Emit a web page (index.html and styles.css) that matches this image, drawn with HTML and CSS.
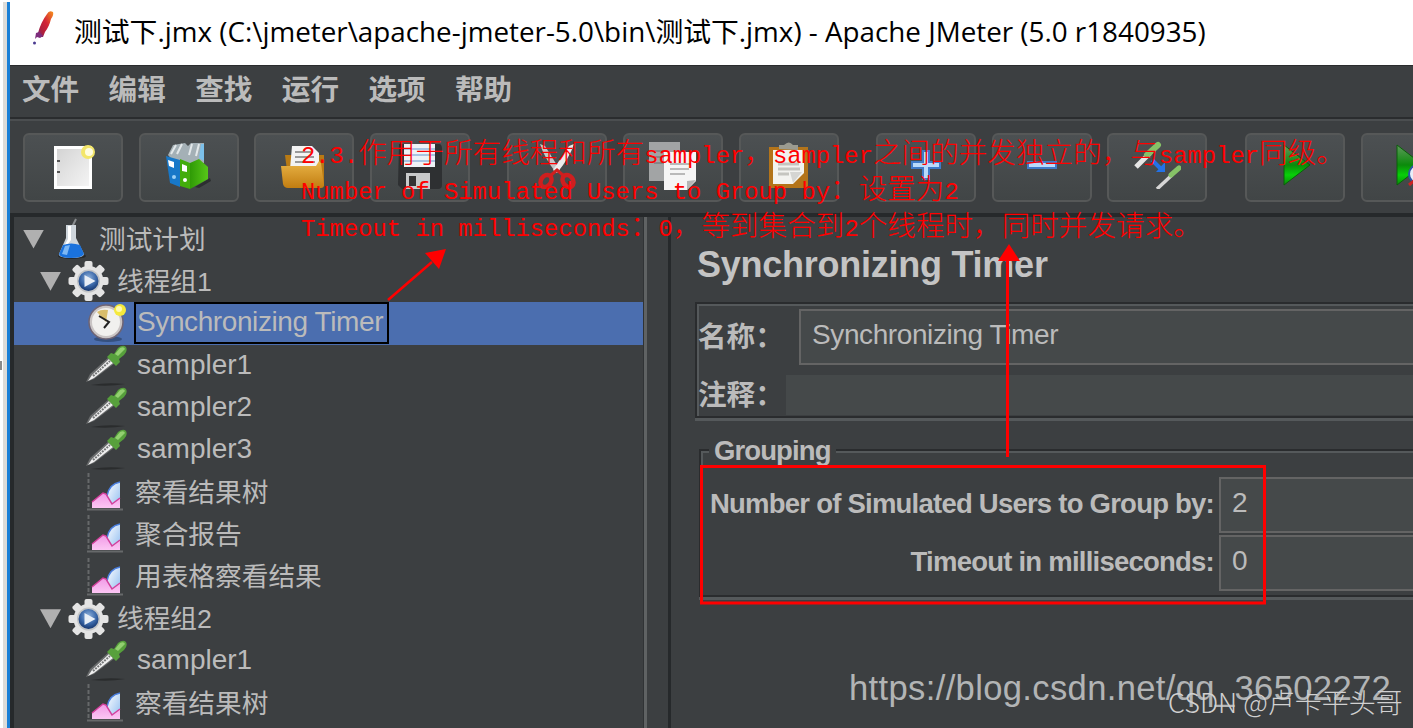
FILE: index.html
```html
<!DOCTYPE html>
<html lang="zh-CN">
<head>
  <meta charset="UTF-8" />
  <meta name="viewport" content="width=device-width, initial-scale=1.0" />
  <title>测试下.jmx - Apache JMeter</title>
  <link rel="stylesheet" href="styles.css">
</head>
<body>

  <!-- shared icons -->
  <svg class="defs" width="0" height="0">
    <defs>
      <linearGradient id="gPlay" x1="0" y1="0" x2="0" y2="1">
        <stop offset="0" stop-color="#5f9a5c" />
        <stop offset="0.5" stop-color="#0b8a0b" />
        <stop offset="0.75" stop-color="#08d008" />
        <stop offset="1" stop-color="#0a8a0a" />
      </linearGradient>
      <linearGradient id="gFolder" x1="0" y1="0" x2="0" y2="1">
        <stop offset="0" stop-color="#eab548" />
        <stop offset="1" stop-color="#c17d11" />
      </linearGradient>
      <linearGradient id="gGreen" x1="0" y1="0" x2="1" y2="0">
        <stop offset="0" stop-color="#2f9a06" />
        <stop offset="1" stop-color="#57c718" />
      </linearGradient>
      <linearGradient id="gPaper" x1="0" y1="0" x2="1" y2="1">
        <stop offset="0" stop-color="#d4d4d4" />
        <stop offset="1" stop-color="#f4f4f4" />
      </linearGradient>
      <linearGradient id="gFeather" x1="1" y1="0" x2="0" y2="1">
        <stop offset="0" stop-color="#f7941e" />
        <stop offset="0.45" stop-color="#d32335" />
        <stop offset="0.75" stop-color="#b0203c" />
        <stop offset="1" stop-color="#6a2a86" />
      </linearGradient>
      <radialGradient id="gBall" cx="0.5" cy="0.35" r="0.65">
        <stop offset="0" stop-color="#8fb2dc" />
        <stop offset="0.6" stop-color="#3a67a8" />
        <stop offset="1" stop-color="#16366e" />
      </radialGradient>
      <linearGradient id="gBlue" x1="0" y1="0" x2="1" y2="1">
        <stop offset="0" stop-color="#ffffff" />
        <stop offset="1" stop-color="#8fbcf0" />
      </linearGradient>
      <linearGradient id="gPink" x1="0" y1="0" x2="0" y2="1">
        <stop offset="0" stop-color="#f09ae6" />
        <stop offset="1" stop-color="#fcc6f4" />
      </linearGradient>
    </defs>

    <symbol id="flask" viewBox="0 0 30 42">
      <ellipse cx="16" cy="38" rx="14" ry="3" fill="#26282a" />
      <path d="M16 9L20 1" stroke="#8a8d90" stroke-width="2" />
      <path d="M10 7H20V20L28 36Q28 40 15 40Q2 40 3 36L10 20Z" fill="#cfd6dc" />
      <path d="M12 8H15V22L9 30H7L12 21Z" fill="#fff" />
      <path d="M7 27Q15 24 24 27L28 36Q26 40 15 40Q4 40 3 36Z" fill="#1a72dd" />
      <path d="M9 28L14 27L11 37L6 36Z" fill="#7db8f5" />
    </symbol>

    <symbol id="gear" viewBox="-20 -20 40 40">
      <g fill="#e4e4e4">
        <circle r="15" />
        <rect x="-4" y="-20" width="8" height="40" rx="2" />
        <rect x="-4" y="-20" width="8" height="40" rx="2" transform="rotate(45)" />
        <rect x="-4" y="-20" width="8" height="40" rx="2" transform="rotate(90)" />
        <rect x="-4" y="-20" width="8" height="40" rx="2" transform="rotate(135)" />
      </g>
      <circle r="11.500" fill="#c2c4c6" />
      <circle r="10" fill="url(#gBall)" />
      <path d="M-4 -6L7 0L-4 6Z" fill="#e8eef6" />
    </symbol>

    <symbol id="clock" viewBox="0 0 40 40">
      <ellipse cx="20" cy="36" rx="14" ry="3" fill="#35507f" />
      <circle cx="18" cy="19" r="17" fill="#c9c4c4" />
      <circle cx="18" cy="19" r="17" fill="none" stroke="#6e6474" stroke-width="1.500" />
      <circle cx="18" cy="19" r="14" fill="#f1f0ee" />
      <path d="M18 19L9 9Q13 6 20 7Z" fill="#d9bd6c" />
      <path d="M11 13L21 19L16 25" fill="none" stroke="#222" stroke-width="2" />
      <circle cx="32" cy="7" r="6" fill="#f5e93c" />
      <circle cx="31" cy="6" r="3" fill="#fffbb0" />
    </symbol>

    <symbol id="dropper" viewBox="0 0 42 42">
      <path d="M6 40Q22 37 40 39Q24 42 6 40Z" fill="#2a2c2d" />
      <path d="M1 37L5 29L24 12L30 18L9 34Z" fill="#6a6c6d" />
      <path d="M3 36L7 30L24 14L28 18L9 33Z" fill="#f0f0f0" />
      <path d="M8 31L25 16" stroke="#747677" stroke-width="2" stroke-dasharray="2 1" />
      <path d="M22 12L26 8L29 9L33 3Q38 -1 41 2Q43 6 39 10L34 14L35 17L31 21Z" fill="#57a03c" />
      <path d="M30 9L35 3Q39 1 40 4L33 11Z" fill="#93d070" />
    </symbol>

    <symbol id="chart" viewBox="0 0 38 40">
      <path d="M1.500 1V36" stroke="#66696a" stroke-width="2" stroke-dasharray="4 2" />
      <path d="M0 37.500H36" stroke="#66696a" stroke-width="2" />
      <path d="M20 24Q22 12 33 10V36H25Z" fill="url(#gBlue)" />
      <path d="M20 24Q22 12 33 10" fill="none" stroke="#4a7fe0" stroke-width="1.500" />
      <path d="M5 36V30L16 21L19 22L25 32L33 26V36Z" fill="url(#gPink)" />
      <path d="M5 30L16 21L19 22L25 32L33 26" fill="none" stroke="#d3409c" stroke-width="1.500" />
    </symbol>

    <symbol id="play" viewBox="0 0 30 42">
      <path d="M2 1L28 21L2 41Z" fill="url(#gPlay)" stroke="#0a5f0a" />
    </symbol>
  </svg>

  <div class="edge"></div>
  <div class="edge-mark"></div>

  <div class="window">
    <div class="titlebar">
      <svg class="feather" viewBox="0 0 22 36">
        <path d="M14 4Q16 0 20 2Q21 5 18 9Q16 17 12 22L10 27L7 27L5 23Q8 12 14 4Z" fill="url(#gFeather)" />
        <path d="M3 23L6 22L10 26L7 28L4 27L2 29Z" fill="#7d2d7c" />
        <circle cx="1.500" cy="33" r="1.500" fill="#4a3a90" />
      </svg>
      <span class="title">测试下.jmx (C:\jmeter\apache-jmeter-5.0\bin\测试下.jmx) - Apache JMeter (5.0 r1840935)</span>
    </div>

    <div class="menubar">
      <span>文件</span>
      <span>编辑</span>
      <span>查找</span>
      <span>运行</span>
      <span>选项</span>
      <span>帮助</span>
    </div>

    <div class="toolbar">
      <div class="tool">
        <svg width="48" height="48" viewBox="0 0 48 48">
          <path d="M5 5H43V48H5Z" fill="#fff" />
          <path d="M8 8H40V45H8Z" fill="url(#gPaper)" />
          <path d="M8 20H11M8 31H11" stroke="#555" stroke-width="2" />
          <circle cx="39" cy="11" r="7" fill="#f3e66b" />
          <circle cx="40" cy="11" r="4" fill="#fffde0" />
        </svg>
      </div>
      <div class="tool">
        <svg width="48" height="48" viewBox="0 0 48 48">
          <path d="M30 46L45 37L46 40L34 47Z" fill="#2c2f30" />
          <path d="M3 14L8 4L20 2L23 5L26 2L39 2V22H10Z" fill="#a4b0b6" />
          <path d="M6 13L11 4M12 13L17 3M24 14L27 3M31 15L34 3" stroke="#e3e8ea" stroke-width="2" />
          <path d="M36 3H39V20L34 17Z" fill="#7cc0ea" />
          <path d="M1 15L15 19V46L5 42Z" fill="#1878c8" />
          <path d="M3 19L9 21V27L4 25Z" fill="#fff" />
          <path d="M15 18L25 22V48L15 45Z" fill="#43ad0c" />
          <path d="M25 22L34 18L43 26V38L25 48Z" fill="url(#gGreen)" />
          <path d="M17 23L22 25V31L17 30Z" fill="#fff" />
          <circle cx="9" cy="36" r="2" fill="#9bd0f5" />
          <circle cx="20" cy="39" r="2" fill="#fff" />
        </svg>
      </div>
      <div class="tool">
        <svg width="48" height="48" viewBox="0 0 48 48">
          <path d="M5 14H44V45H9Z" fill="#b87a14" />
          <path d="M12 5H32L39 12V28H10Z" fill="#f3f3f3" />
          <path d="M15 11H31M15 16H34M15 21H35" stroke="#9a9a9a" stroke-width="2" />
          <path d="M1 25H36L39 20L41 22L44 44Q44 47 41 47H8Q4 47 3 43Z" fill="url(#gFolder)" />
        </svg>
      </div>
      <div class="tool">
        <svg width="48" height="48" viewBox="0 0 48 48">
          <path d="M3 3H43Q46 3 46 8V44Q46 48 42 48H6L2 44Z" fill="#2e3032" />
          <path d="M8 3H39V26H8Z" fill="#eef2f6" />
          <path d="M8 8H39M8 14H39M8 20H39" stroke="#a9c4e2" stroke-width="2" />
          <path d="M10 32H34V48H10Z" fill="#c8c9ca" />
          <path d="M13 35H20V45H13Z" fill="#333" />
        </svg>
      </div>
      <div class="tool group">
        <svg width="48" height="48" viewBox="0 0 48 48">
          <path d="M7 3L12 5L27 29L23 32Q11 16 7 3Z" fill="#c5c7c8" />
          <path d="M41 3L36 5L20 29L24 32Q37 16 41 3Z" fill="#ececec" />
          <ellipse cx="13" cy="40" rx="5" ry="6.500" fill="none" stroke="#cf1f1f" stroke-width="4.500" transform="rotate(35 13 40)" />
          <ellipse cx="35" cy="40" rx="5" ry="6.500" fill="none" stroke="#cf1f1f" stroke-width="4.500" transform="rotate(-35 35 40)" />
          <path d="M17 35L24 29L31 35" fill="none" stroke="#cf1f1f" stroke-width="3" />
        </svg>
      </div>
      <div class="tool">
        <svg width="48" height="50" viewBox="0 0 48 50">
          <path d="M0 2H31V41H0Z" fill="#a2a4a5" />
          <path d="M5 11H17M5 17H15M5 23H15" stroke="#858788" stroke-width="2" />
          <path d="M15 12H47V41L38 50H15Z" fill="#f5f5f5" />
          <path d="M21 24H42M21 29H40M21 34H36" stroke="#b9b9b9" stroke-width="2" />
          <path d="M47 40L38 50V41Z" fill="#b5b5b5" />
        </svg>
      </div>
      <div class="tool">
        <svg width="48" height="48" viewBox="0 0 48 48">
          <path d="M4 6H43V47H4Z" fill="#b3741a" />
          <path d="M8 9H39V43H8Z" fill="#f3f3f0" />
          <path d="M14 8V4H19Q24 -1 28 4H33V9Z" fill="#9b9b90" />
          <path d="M13 23H34M13 28H35M13 33H24" stroke="#c5c5c0" stroke-width="3" />
          <path d="M39 32V43H28Z" fill="#b3741a" />
          <path d="M25 31H37L28 42Z" fill="#d5d5d2" />
        </svg>
      </div>
      <div class="tool group">
        <svg width="30" height="30" viewBox="0 0 30 30">
          <path d="M12 1H18V12H29V18H18V29H12V18H1V12H12Z" fill="#b9dafb" stroke="#3f7bc9" stroke-width="2" />
        </svg>
      </div>
      <div class="tool">
        <svg width="30" height="30" viewBox="0 0 30 30">
          <path d="M1 12H29V18H1Z" fill="#b9dafb" stroke="#3f7bc9" stroke-width="2" />
        </svg>
      </div>
      <div class="tool">
        <svg width="48" height="48" viewBox="0 0 48 48">
          <path d="M3 26L17 12" stroke="#e6e6e6" stroke-width="5" />
          <path d="M14 14L25 4" stroke="#86c267" stroke-width="6" stroke-linecap="round" />
          <path d="M24 48L39 34" stroke="#d6d6d6" stroke-width="3.500" />
          <path d="M38 34L46 27" stroke="#86c267" stroke-width="5" stroke-linecap="round" />
          <path d="M19 19L28 28" stroke="#2372e8" stroke-width="4" />
          <path d="M23 31L32 31V21Z" fill="#2372e8" />
        </svg>
      </div>
      <div class="tool group">
        <svg class="icon-play" width="30" height="42"><use href="#play" /></svg>
      </div>
      <div class="tool">
        <svg width="32" height="42" viewBox="0 0 32 42">
          <path d="M2 1L28 21L2 41Z" fill="url(#gPlay)" stroke="#0a5f0a" />
          <circle cx="23" cy="30" r="9" fill="#e8eef8" stroke="#2c55a8" stroke-width="2" />
          <path d="M14 41L20 36" stroke="#c22" stroke-width="3" />
        </svg>
      </div>
    </div>

    <div class="main">
      <div class="tree">
        <div class="row level0"><i class="toggle"></i><svg class="icon-flask"><use href="#flask" /></svg><span>测试计划</span></div>
        <div class="row level1"><i class="toggle"></i><svg class="icon-gear"><use href="#gear" /></svg><span>线程组1</span></div>
        <div class="row level2 selected"><svg class="icon-clock"><use href="#clock" /></svg><span class="focus">Synchronizing Timer</span></div>
        <div class="row level2"><svg class="icon-dropper"><use href="#dropper" /></svg><span class="en">sampler1</span></div>
        <div class="row level2"><svg class="icon-dropper"><use href="#dropper" /></svg><span class="en">sampler2</span></div>
        <div class="row level2"><svg class="icon-dropper"><use href="#dropper" /></svg><span class="en">sampler3</span></div>
        <div class="row level2"><svg class="icon-chart"><use href="#chart" /></svg><span>察看结果树</span></div>
        <div class="row level2"><svg class="icon-chart"><use href="#chart" /></svg><span>聚合报告</span></div>
        <div class="row level2"><svg class="icon-chart"><use href="#chart" /></svg><span>用表格察看结果</span></div>
        <div class="row level1"><i class="toggle"></i><svg class="icon-gear"><use href="#gear" /></svg><span>线程组2</span></div>
        <div class="row level2"><svg class="icon-dropper"><use href="#dropper" /></svg><span class="en">sampler1</span></div>
        <div class="row level2"><svg class="icon-chart"><use href="#chart" /></svg><span>察看结果树</span></div>
      </div>

      <div class="divider"></div>

      <div class="panel">
        <h1>Synchronizing Timer</h1>

        <div class="etched name-box">
          <div class="field name">
            <label>名称：</label>
            <div class="input">Synchronizing Timer</div>
          </div>
          <div class="field comment">
            <label>注释：</label>
            <div class="input flat"></div>
          </div>
        </div>

        <div class="etched group-box">
          <div class="legend">Grouping</div>
          <div class="field">
            <label class="users">Number of Simulated Users to Group by:</label>
            <div class="input">2</div>
          </div>
          <div class="field">
            <label class="timeout">Timeout in milliseconds:</label>
            <div class="input">0</div>
          </div>
        </div>
      </div>
    </div>
  </div>

  <!-- notes drawn over the window -->
  <div class="note">
    <p>2.3.<b>作用于所有线程和所有</b>sampler<b>，</b>sampler<b>之间的并发独立的，与</b>sampler<b>同级。</b></p>
    <p>Number of Simulated Users to Group by<b>：设置为</b>2</p>
    <p>Timeout in milliseconds<b>：</b>0<b>，等到集合到</b>2<b>个线程时，同时并发请求。</b></p>
  </div>
  <svg class="marks" width="1413" height="728" viewBox="0 0 1413 728">
    <g fill="none" stroke="#f00" stroke-width="3">
      <path d="M388 300L432 262" stroke-width="2.500" />
      <path d="M1007.500 457V258" />
      <rect x="701.500" y="466.500" width="563" height="136.500" />
    </g>
    <path d="M446 249L439 269L425 253Z" fill="#f00" />
    <path d="M1009 244L1020 261H998Z" fill="#f00" />
  </svg>

  <div class="link-mark">https://blog.csdn.net/qq_36502272</div>
  <div class="csdn-mark">CSDN @卢卡平头哥</div>

</body>
</html>
```
FILE: styles.css
```css
* {
  margin: 0;
  padding: 0;
  box-sizing: border-box;
}

body {
  display: flex;
  position: relative;
  width: 1413px;
  height: 728px;
  overflow: hidden;
  background: #fff;
  color: #bbb;
  font-family: "Liberation Sans", "Noto Sans CJK SC", sans-serif;
  font-size: 26.7px;
}

.defs {
  position: absolute;
}

.edge {
  width: 10px;
  flex: none;
  margin-top: 2px;
  background: linear-gradient(to right, #fff 3px, #dedcd8 3px, #dedcd8 7px, #1b80d6 7px);
}

/* bit of the page behind the window */
.edge-mark {
  position: absolute;
  left: 0;
  top: 361px;
  width: 2px;
  height: 9px;
  background: #8a8a8a;
}

.window {
  flex: 1;
  min-width: 0;
  display: flex;
  flex-direction: column;
  background: #3c3f41;
}

.titlebar {
  display: flex;
  align-items: center;
  height: 65px;
  flex: none;
  padding-left: 23px;
  background: #fff;
  color: #000;
  white-space: nowrap;
}

.feather {
  width: 22px;
  height: 36px;
  margin-top: -9px;
}

.title {
  margin: -6px 0 0 19px;
  font-family: "Open Sans", "Noto Sans CJK SC", sans-serif;
  font-size: 27.8px;
}

.menubar {
  display: flex;
  align-items: center;
  height: 54px;
  flex: none;
  gap: 29.4px;
  padding: 0 0 4px 12px;
  border-top: 1px solid #2a2c2e;
  border-bottom: 2px solid #2a2c2e;
  font-size: 28.6px;
  font-weight: bold;
  line-height: 40px;
}

.toolbar {
  display: flex;
  height: 98px;
  flex: none;
  gap: 15.6px;
  padding: 12px 0 0 13px;
  border-top: 2px solid #4b4e50;
  border-bottom: 4px solid #26292b;
  overflow: hidden;
}

.tool {
  display: flex;
  align-items: center;
  justify-content: center;
  width: 100px;
  height: 69px;
  flex: none;
  padding-bottom: 5px;
  border: 2px solid #565858;
  border-radius: 6px;
  background: linear-gradient(#4c5052, #414546);
}

.tool.group {
  margin-left: 22px;
}

.icon-play {
  margin-left: 5px;
}

.main {
  flex: 1;
  min-height: 0;
  display: flex;
}

.tree {
  width: 634px;
  flex: none;
  padding-top: 1px;
  border-left: 4px solid #26292b;
  border-right: 1px solid #303335;
  overflow: hidden;
}

.row {
  display: flex;
  align-items: center;
  height: 42.2px;
  white-space: nowrap;
}

.row span {
  padding-bottom: 4px;
}

.row.level0 {
  padding-left: 9px;
}

.row.level1 {
  padding-left: 26px;
}

.row.level2 {
  padding-left: 71px;
}

.row.selected {
  background: #4b6eaf;
}

.toggle {
  width: 21px;
  height: 19px;
  background: #b0b0b0;
  clip-path: polygon(0 0, 100% 0, 50% 100%);
}

.icon-flask {
  width: 30px;
  height: 42px;
  margin: 0 13px 0 12px;
}

.icon-gear {
  width: 41px;
  height: 40px;
  margin: 0 8px 0 7px;
}

.icon-clock {
  width: 40px;
  height: 40px;
  margin-left: 3px;
}

.icon-dropper {
  width: 42px;
  height: 42px;
  margin: 0 10px 0 0;
}

.icon-chart {
  width: 38px;
  height: 40px;
  margin: 0 10px 0 2px;
}

.row .focus {
  margin-left: 6px;
  height: 42px;
  padding: 0 4px 0 1px;
  border: 2px solid #000;
  font-size: 28px;
  line-height: 35px;
  letter-spacing: -0.4px;
}

.row .en {
  padding-bottom: 2px;
  font-size: 28px;
}

.divider {
  width: 27px;
  flex: none;
  border-left: 3px solid #5f6263;
  border-right: 3px solid #26292b;
}

.panel {
  flex: 1;
  min-width: 0;
  padding-left: 24px;
}

h1 {
  height: 85px;
  padding-left: 2px;
  font-size: 36px;
  letter-spacing: -0.25px;
  line-height: 96px;
  color: #c4c4c4;
  white-space: nowrap;
}

.etched {
  border: 2px solid #2a2c2e;
  border-right: none;
  box-shadow: inset 2px 2px 0 #55595b, 0 3px 0 #55595b;
}

.field {
  display: flex;
  align-items: center;
}

.field label {
  font-weight: bold;
  white-space: nowrap;
}

.input {
  flex: 1;
  height: 56px;
  padding-left: 11px;
  border: 2px solid #646464;
  border-right: none;
  background: #45494a;
  font-size: 28px;
  letter-spacing: -0.4px;
  line-height: 48px;
}

.input.flat {
  height: 40px;
  border: none;
}

.name-box {
  height: 116px;
  padding: 5px 0 0 1px;
}

.name-box label {
  flex: none;
  padding-bottom: 6px;
  font-size: 28.6px;
}

.name label {
  width: 101px;
}

.comment {
  height: 40px;
  margin-top: 10px;
}

.comment label {
  width: 88px;
}

.group-box {
  position: relative;
  height: 148px;
  margin: 31px 0 0 4px;
  padding-top: 26px;
}

.legend {
  position: absolute;
  left: 8px;
  top: -18px;
  padding: 0 5px;
  background: #3c3f41;
  font-size: 27.5px;
  font-weight: bold;
  line-height: 36px;
  letter-spacing: -0.9px;
}

.group-box .field {
  margin-bottom: 2px;
}

.group-box label {
  width: 518px;
  padding: 0 5px 2px 0;
  font-size: 27.5px;
  text-align: right;
  letter-spacing: -0.77px;
}

.note {
  position: absolute;
  left: 301px;
  top: 137px;
  color: #f00;
  font-family: "Liberation Mono", monospace;
  font-size: 23.83px;
  white-space: nowrap;
}

.note p {
  height: 36.3px;
  line-height: 36.3px;
}

.note b {
  font-family: "Noto Sans CJK SC", sans-serif;
  font-size: 28.6px;
  font-weight: 300;
  line-height: 1;
}

.marks {
  position: absolute;
  left: 0;
  top: 0;
}

.link-mark {
  position: absolute;
  left: 849px;
  top: 668px;
  font-size: 34.6px;
  letter-spacing: 0.35px;
  line-height: 40px;
  color: #b2b4b5;
}

.csdn-mark {
  position: absolute;
  left: 1168px;
  top: 684px;
  font-family: "Noto Sans CJK SC", sans-serif;
  font-size: 27px;
  line-height: 36px;
  font-weight: 300;
  color: #d0d0d0;
  white-space: nowrap;
}
```
